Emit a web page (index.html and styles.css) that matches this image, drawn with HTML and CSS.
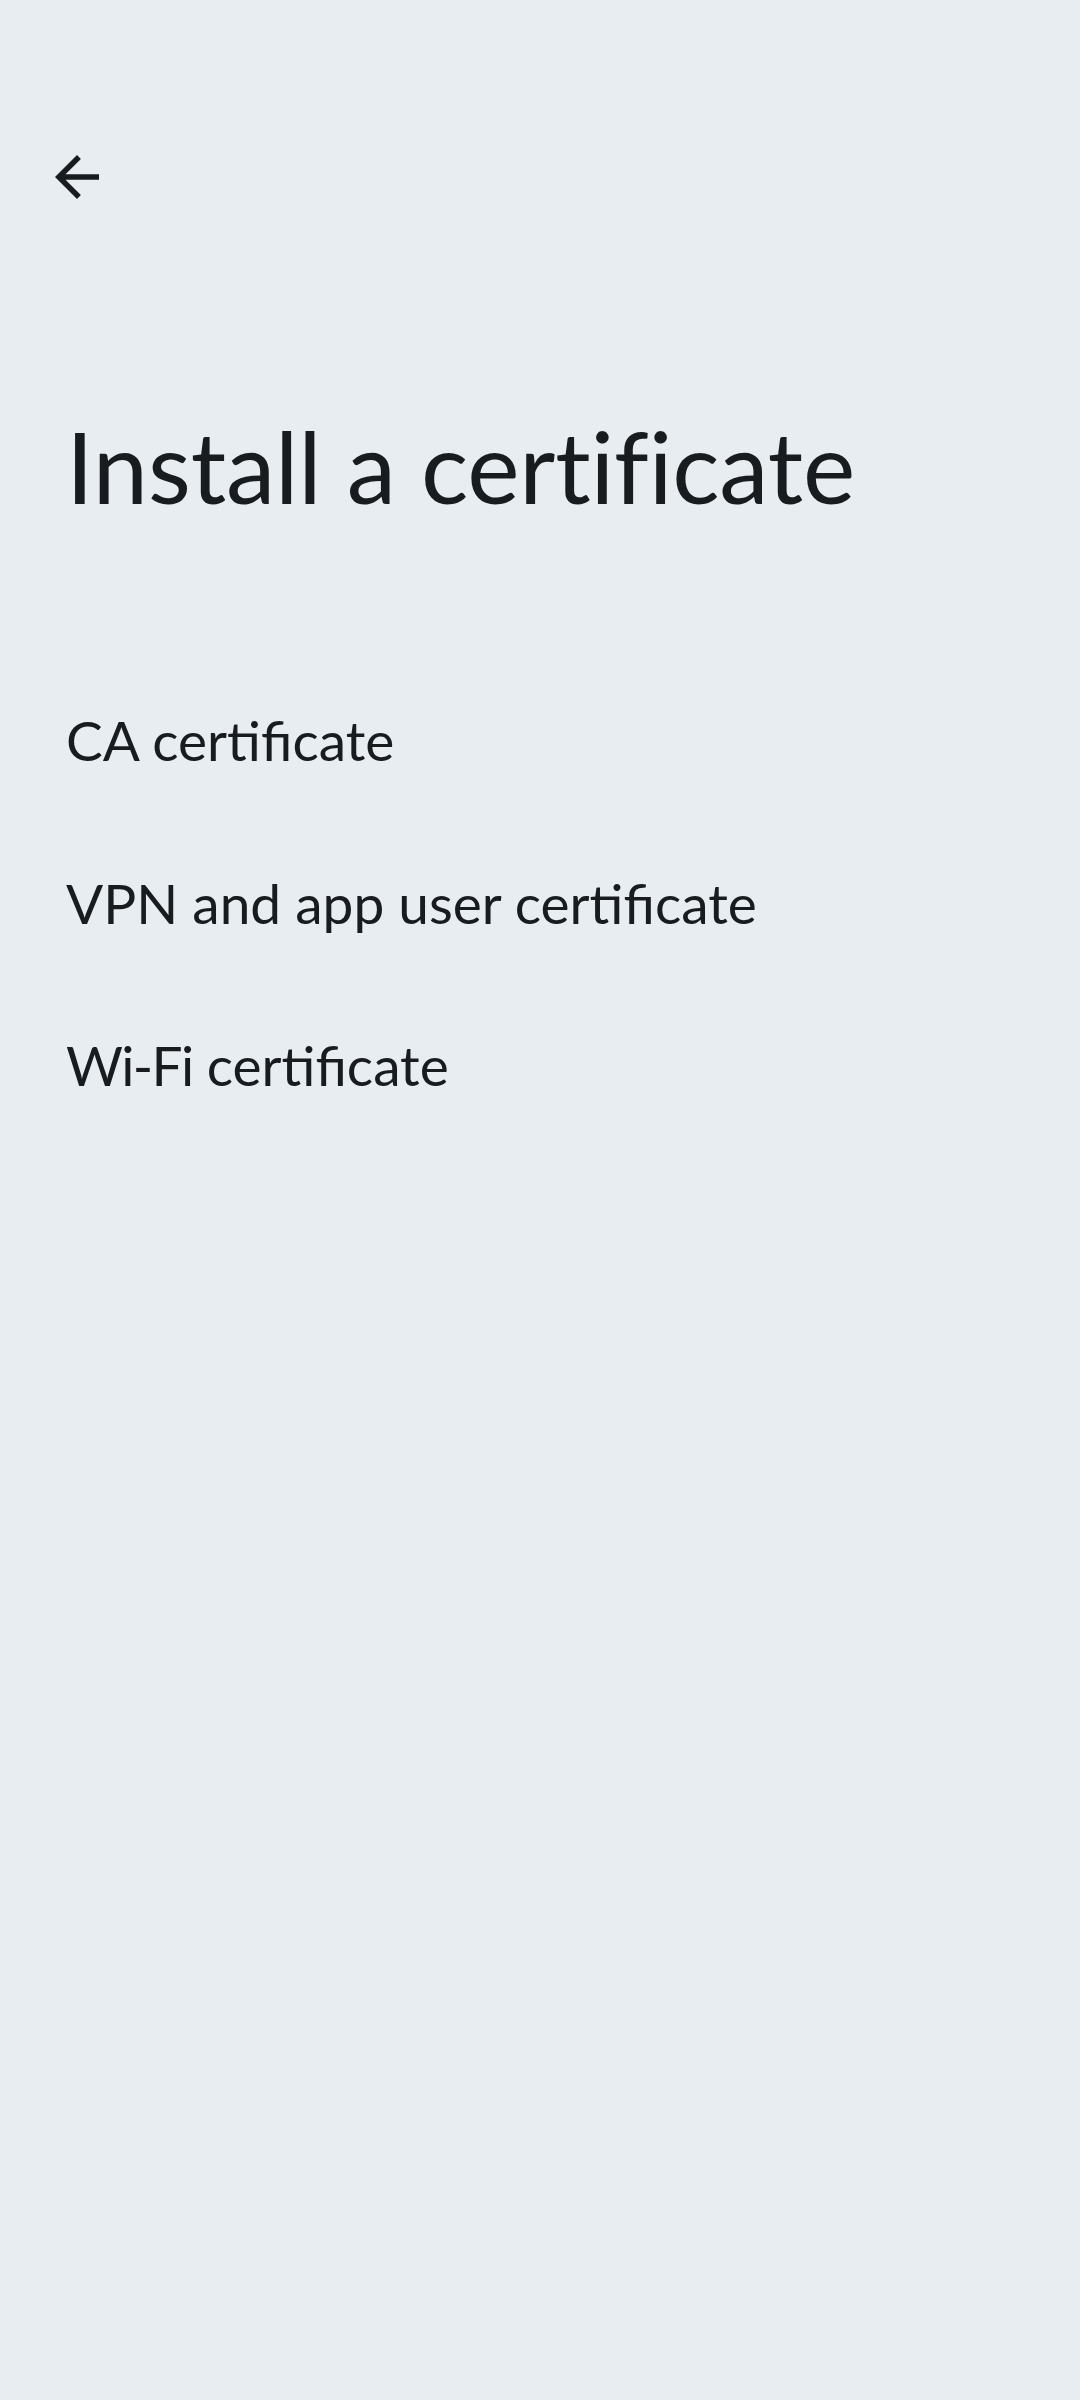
FILE: index.html
```html
<!DOCTYPE html>
<html lang="en">
<head>
<meta charset="utf-8">
<title>Install a certificate</title>
<link rel="stylesheet" href="styles.css">
</head>
<body>
<div class="screen">
  <header class="topbar">
    <button class="back" aria-label="Back">
      <svg viewBox="0 0 24 24" width="66" height="66"><path d="M20 11H7.83l5.59-5.59L12 4l-8 8 8 8 1.41-1.41L7.83 13H20v-2z" fill="#191c1f"/></svg>
    </button>
  </header>
  <h1 class="title">Install a certificate</h1>
  <ul class="list">
    <li class="item">CA certificate</li>
    <li class="item">VPN and app user certificate</li>
    <li class="item"><span class="tight">Wi-Fi</span>&nbsp;certificate</li>
  </ul>
</div>
</body>
</html>
```

FILE: styles.css
```css
html, body {
  margin: 0;
  padding: 0;
  background: #e8edf1;
}
body {
  font-family: Lato, "Noto Sans", sans-serif;
  color: #191c1f;
  width: 1080px;
  height: 2400px;
}
.screen {
  display: flex;
  flex-direction: column;
}
.topbar {
  display: flex;
  padding: 144px 0 0 44px;
}
.back {
  width: 66px;
  height: 66px;
  padding: 0;
  border: 0;
  background: none;
  display: flex;
}
.title {
  margin: 196px 0 0 0;
  padding-left: 66px;
  font-size: 99px;
  font-weight: 400;
  line-height: 120px;
  letter-spacing: -0.15px;
}
.list {
  list-style: none;
  margin: 133px 0 0 0;
  padding: 0;
  display: flex;
  flex-direction: column;
}
.item {
  min-height: 162.5px;
  display: flex;
  align-items: center;
  padding-left: 66px;
  font-size: 55px;
  line-height: 66px;
  white-space: pre;
}
.tight {
  letter-spacing: -1.6px;
}
```
